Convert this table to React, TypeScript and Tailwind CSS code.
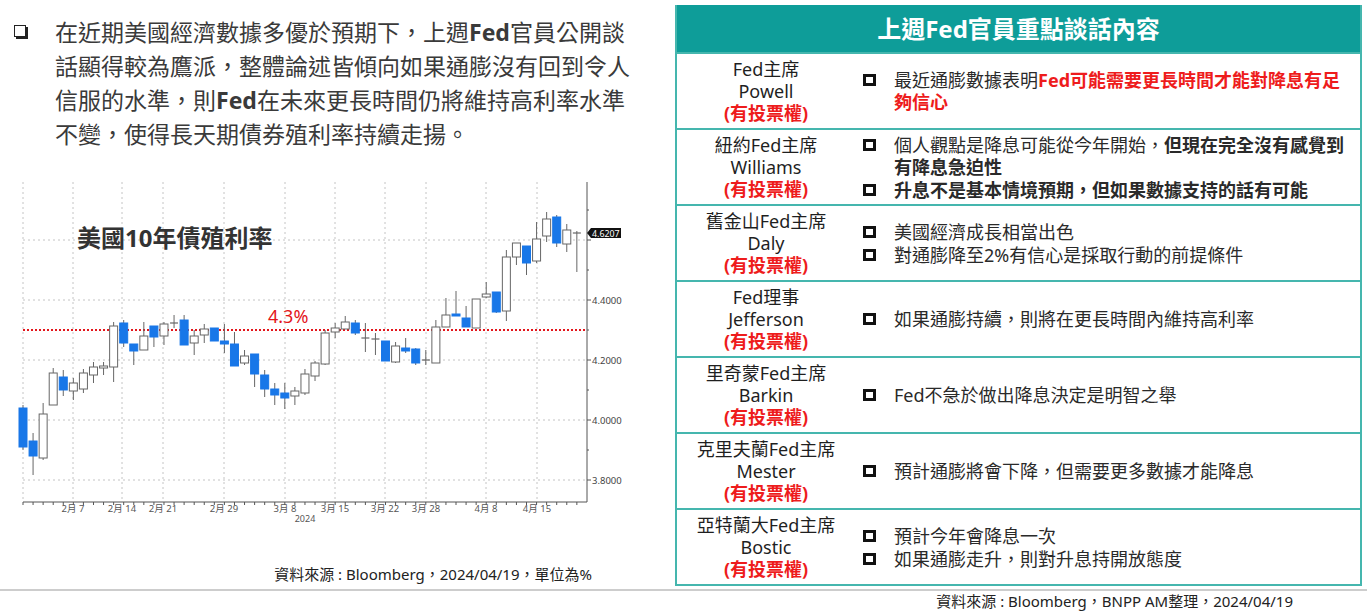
import React from "react";

type Seg = { t: string; bold?: boolean; red?: boolean };
type Row = { title: string; name: string; items: Seg[][][] };

// each item is a list of lines, each line a list of segments
const rows: Row[] = [
  {
    title: "Fed主席",
    name: "Powell",
    items: [
      [
        [{ t: "最近通膨數據表明" }, { t: "Fed可能需要更長時間才能對降息有足", bold: true, red: true }],
        [{ t: "夠信心", bold: true, red: true }],
      ],
    ],
  },
  {
    title: "紐約Fed主席",
    name: "Williams",
    items: [
      [
        [{ t: "個人觀點是降息可能從今年開始，" }, { t: "但現在完全沒有感覺到", bold: true }],
        [{ t: "有降息急迫性", bold: true }],
      ],
      [[{ t: "升息不是基本情境預期，但如果數據支持的話有可能", bold: true }]],
    ],
  },
  {
    title: "舊金山Fed主席",
    name: "Daly",
    items: [[[{ t: "美國經濟成長相當出色" }]], [[{ t: "對通膨降至2%有信心是採取行動的前提條件" }]]],
  },
  { title: "Fed理事", name: "Jefferson", items: [[[{ t: "如果通膨持續，則將在更長時間內維持高利率" }]]] },
  { title: "里奇蒙Fed主席", name: "Barkin", items: [[[{ t: "Fed不急於做出降息決定是明智之舉" }]]] },
  { title: "克里夫蘭Fed主席", name: "Mester", items: [[[{ t: "預計通膨將會下降，但需要更多數據才能降息" }]]] },
  {
    title: "亞特蘭大Fed主席",
    name: "Bostic",
    items: [[[{ t: "預計今年會降息一次" }]], [[{ t: "如果通膨走升，則對升息持開放態度" }]]],
  },
];

// [bodyTop, bodyBottom, wickTop, wickBottom, kind]
const candles: [number, number, number, number, "b" | "w" | "d"][] = [
  [408, 447, 405, 450, "b"],
  [441, 456, 433, 475, "b"],
  [414, 458, 403, 460, "w"],
  [373, 405, 368, 405, "w"],
  [377, 390, 370, 396, "b"],
  [383, 391, 378, 400, "w"],
  [373, 389, 369, 393, "w"],
  [367, 375, 362, 383, "w"],
  [366, 368, 362, 375, "w"],
  [326, 367, 322, 382, "w"],
  [323, 343, 320, 347, "b"],
  [344, 351, 344, 365, "b"],
  [336, 350, 322, 350, "w"],
  [326, 337, 326, 347, "b"],
  [324, 336, 322, 345, "w"],
  [323, 323, 315, 328, "d"],
  [320, 345, 315, 345, "b"],
  [336, 343, 330, 355, "w"],
  [329, 335, 324, 343, "w"],
  [328, 341, 328, 341, "b"],
  [341, 344, 324, 353, "b"],
  [344, 366, 332, 366, "b"],
  [356, 363, 350, 365, "w"],
  [354, 374, 354, 387, "b"],
  [375, 389, 370, 397, "b"],
  [389, 395, 383, 405, "b"],
  [393, 398, 383, 409, "b"],
  [391, 396, 387, 405, "w"],
  [374, 393, 369, 395, "w"],
  [363, 376, 361, 381, "w"],
  [333, 364, 330, 365, "w"],
  [328, 332, 323, 338, "w"],
  [322, 329, 316, 329, "w"],
  [323, 333, 320, 335, "b"],
  [338, 338, 323, 352, "d"],
  [339, 339, 333, 355, "d"],
  [341, 361, 341, 361, "b"],
  [346, 362, 342, 363, "w"],
  [348, 351, 338, 353, "b"],
  [349, 363, 348, 365, "b"],
  [360, 360, 350, 365, "d"],
  [327, 363, 320, 363, "w"],
  [315, 327, 298, 327, "w"],
  [314, 316, 291, 316, "b"],
  [318, 327, 306, 327, "b"],
  [299, 328, 299, 328, "w"],
  [294, 297, 282, 298, "w"],
  [292, 312, 292, 313, "b"],
  [257, 311, 250, 321, "w"],
  [243, 257, 243, 265, "w"],
  [246, 263, 246, 275, "b"],
  [239, 261, 222, 263, "w"],
  [219, 236, 212, 242, "w"],
  [217, 243, 215, 247, "b"],
  [230, 244, 224, 252, "w"],
  [233, 233, 231, 272, "d"],
];

const vGrid = [23, 73, 122, 163, 224, 285, 335, 385, 426, 486, 537];
const xLabels: [number, string][] = [
  [73, "2月 7"],
  [122, "2月 14"],
  [163, "2月 21"],
  [224, "2月 29"],
  [285, "3月 8"],
  [335, "3月 15"],
  [385, "3月 22"],
  [426, "3月 28"],
  [486, "4月 8"],
  [537, "4月 15"],
];
const yLevels: [number, string][] = [
  [240, "4.6000"],
  [300, "4.4000"],
  [360, "4.2000"],
  [420, "4.0000"],
  [480, "3.8000"],
];

const font = { fontFamily: '"Noto Sans", "Noto Sans CJK TC", sans-serif' };

function Chart() {
  return (
    <svg width={640} height={355} viewBox="0 180 640 355" className="block">
      {vGrid.map((x) => (
        <line key={x} x1={x} x2={x} y1={182} y2={502} stroke="#c4c4c4" strokeWidth={1} strokeDasharray="2 3" />
      ))}
      {yLevels.map(([y]) => (
        <line key={y} x1={23} x2={587} y1={y} y2={y} stroke="#c4c4c4" strokeWidth={1} strokeDasharray="2 3" />
      ))}
      <line x1={587} x2={587} y1={182} y2={502} stroke="#555" strokeWidth={1} />
      <line x1={23} x2={587} y1={502} y2={502} stroke="#555" strokeWidth={1} />
      {candles.map((_, i) => {
        const x = 23 + i * 10.07;
        return <line key={"t" + i} x1={x} x2={x} y1={502} y2={505} stroke="#555" strokeWidth={1} />;
      })}
      {[210, 270, 330, 390, 450].map((y) => (
        <line key={"m" + y} x1={587} x2={589} y1={y} y2={y} stroke="#555" strokeWidth={1} />
      ))}
      <line x1={23} x2={587} y1={330} y2={330} stroke="#e3151b" strokeWidth={2} strokeDasharray="2 2" />
      {candles.map(([bt, bb, wt, wb, k], i) => {
        const x = 23 + i * 10.07;
        return (
          <g key={i}>
            <line x1={x} x2={x} y1={wt} y2={wb} stroke="#666" strokeWidth={1} />
            {k === "d" ? (
              <line x1={x - 4} x2={x + 4} y1={bt} y2={bt} stroke="#666" strokeWidth={1.2} />
            ) : (
              <rect
                x={x - 4}
                y={bt}
                width={8}
                height={Math.max(bb - bt, 1.5)}
                fill={k === "b" ? "#1877e8" : "#ffffff"}
                stroke={k === "b" ? "#1877e8" : "#666"}
                strokeWidth={1}
              />
            )}
          </g>
        );
      })}
      {yLevels.map(([y, t]) => (
        <g key={t}>
          <line x1={587} x2={591} y1={y} y2={y} stroke="#555" strokeWidth={1} />
          {y !== 240 && (
            <text x={592} y={y + 3.5} fontSize={9.5} fill="#444" style={font}>
              {t}
            </text>
          )}
        </g>
      ))}
      <polygon points="587,233 591,228 621,228 621,238 591,238" fill="#111" />
      <text x={592} y={236.5} fontSize={8.8} fill="#fff" style={font}>
        4.6207
      </text>
      {xLabels.map(([x, t]) => (
        <text key={t} x={x} y={512} fontSize={9.5} fill="#555" textAnchor="middle" style={font}>
          {t}
        </text>
      ))}
      <text x={305} y={522} fontSize={9} fill="#555" textAnchor="middle" style={font}>
        2024
      </text>
      <text x={77} y={247} fontSize={24} fontWeight={700} fill="#333" style={font}>
        美國10年債殖利率
      </text>
      <text x={268} y={323} fontSize={18} fill="#e3151b" style={font}>
        4.3%
      </text>
    </svg>
  );
}

function Bullet() {
  return <span className="mt-[5px] block h-[12px] w-[13px] shrink-0 border-[3px] border-[#111]" />;
}

function TableRow({ row }: { row: Row }) {
  return (
    <div className="flex h-[76px] border-t-2 border-[#45b6ae]">
      <div className="flex w-[178px] shrink-0 flex-col items-center justify-center text-[18px] leading-[22px] text-[#1f1f1f]">
        <span>{row.title}</span>
        <span>{row.name}</span>
        <span className="font-bold text-[#ee1c1c]">(有投票權)</span>
      </div>
      <div className="flex flex-1 flex-col justify-center gap-[1px] pl-[8px]">
        {row.items.map((lines, i) => (
          <div key={i} className="flex items-start gap-[18px]">
            <Bullet />
            <div className="text-[18px] leading-[22px] whitespace-nowrap text-[#2a2a2a]">
              {lines.map((segs, l) => (
                <div key={l}>
                  {segs.map((s, j) => (
                    <span key={j} className={(s.bold ? "font-bold " : "") + (s.red ? "text-[#ee1c1c]" : "")}>
                      {s.t}
                    </span>
                  ))}
                </div>
              ))}
            </div>
          </div>
        ))}
      </div>
    </div>
  );
}

export default function App() {
  return (
    <div className="h-[612px] w-[1367px] overflow-hidden bg-white" style={font}>
      <div className="flex h-[589px]">
        <div className="w-[675px] shrink-0">
          <div className="flex pt-[15px] pl-[14px]">
            <span className="mt-[10px] block h-[12px] w-[12px] shrink-0 border-[1.5px] border-[#222] shadow-[2px_2px_0_#222]" />
            <div className="ml-[29px] text-[23px] leading-[34px] text-[#3a3a3a]">
              <div>
                在近期美國經濟數據多優於預期下，上週<span className="font-bold">Fed</span>官員公開談
              </div>
              <div>話顯得較為鷹派，整體論述皆傾向如果通膨沒有回到令人</div>
              <div>
                信服的水準，則<span className="font-bold">Fed</span>在未來更長時間仍將維持高利率水準
              </div>
              <div>不變，使得長天期債券殖利率持續走揚。</div>
            </div>
          </div>
          <div className="mt-[29px]">
            <Chart />
          </div>
          <div className="mt-[28px] flex justify-end pr-[83px] text-[15px] leading-[22px] text-[#222]">
            資料來源 : Bloomberg，2024/04/19，單位為%
          </div>
        </div>
        <div className="w-[687px] shrink-0 pt-[5px]">
          <div className="border-2 border-t-0 border-[#45b6ae]">
            <div className="flex h-[47px] items-center justify-center bg-[#0e9d99] text-[24px] font-bold text-white">
              上週Fed官員重點談話內容
            </div>
            {rows.map((r) => (
              <TableRow key={r.name} row={r} />
            ))}
          </div>
        </div>
      </div>
      <div className="h-[2px] bg-[#cdcdcd]" />
      <div className="flex justify-end pr-[74px] text-[15px] leading-[20px] text-[#222]">
        資料來源 : Bloomberg，BNPP AM整理，2024/04/19
      </div>
    </div>
  );
}
